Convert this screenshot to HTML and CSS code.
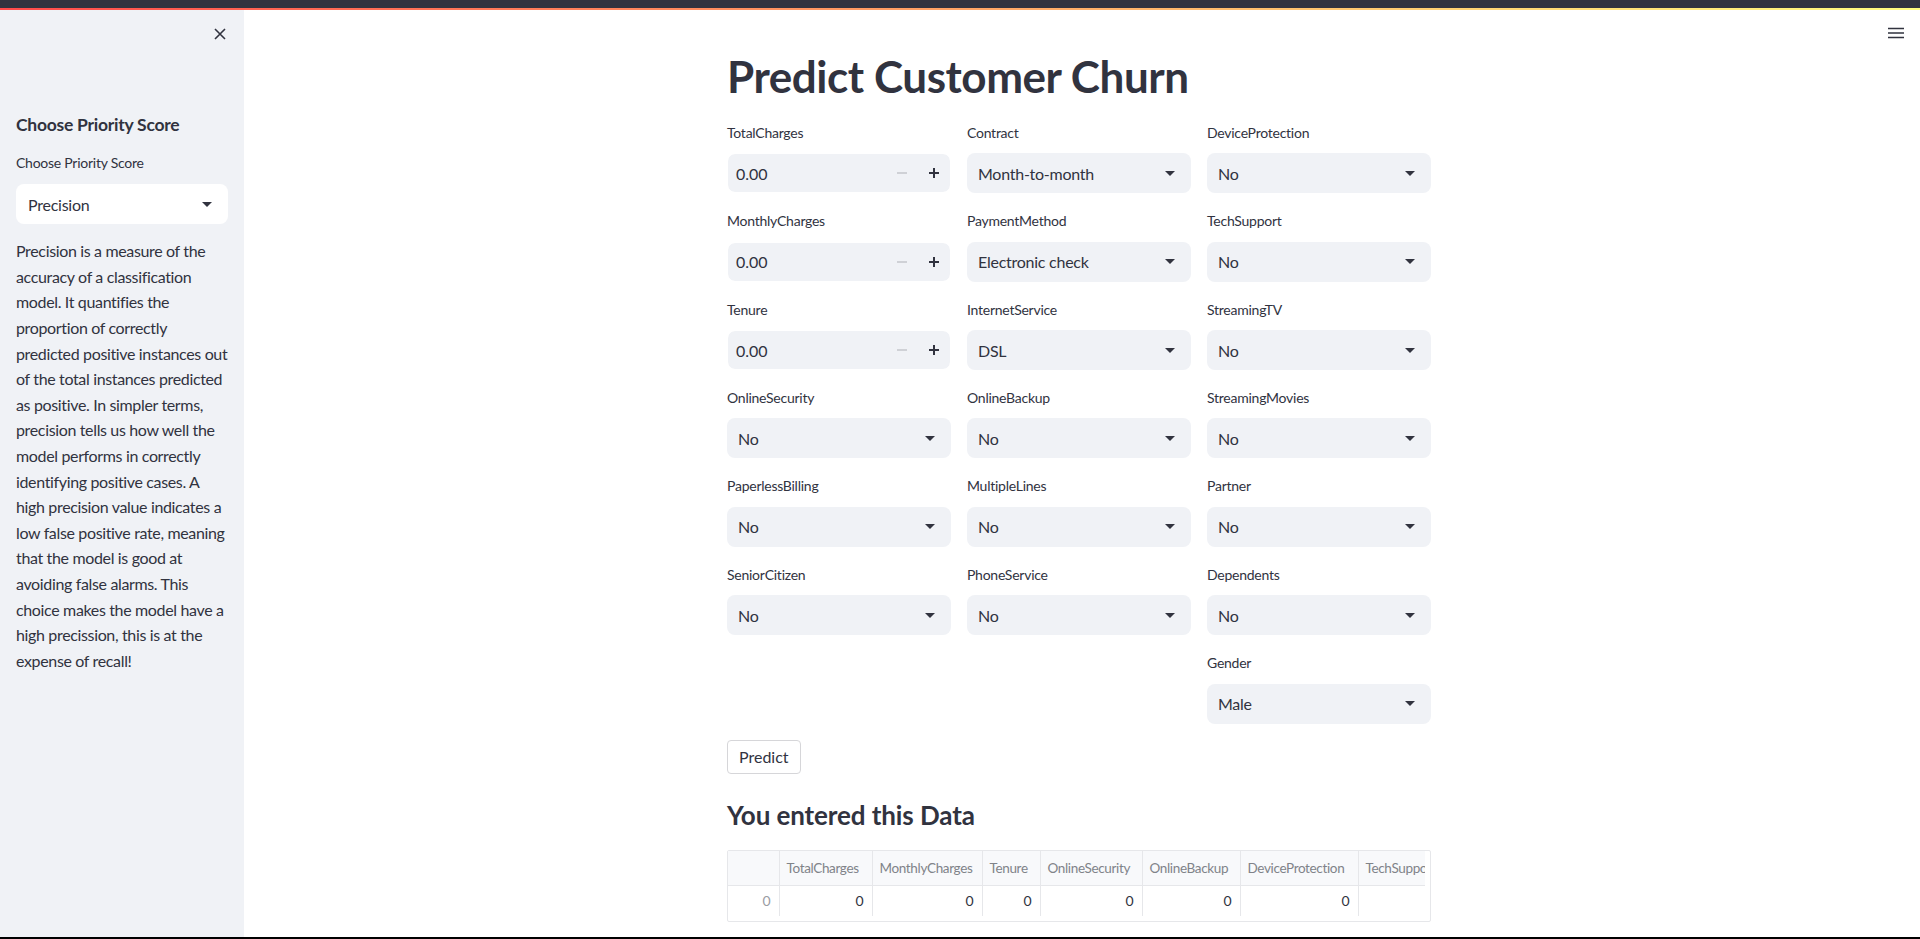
FILE: index.html
```html
<!DOCTYPE html>
<html lang="en">
<head>
<meta charset="utf-8">
<title>Predict Customer Churn</title>
<link rel="stylesheet" href="styles.css">
</head>
<body>
<div class="topbar"></div>
<div class="decoration"></div>
<div class="app">
  <aside class="sidebar">
    <div class="sidebar-head">
      <button class="close" aria-label="Close sidebar">
        <svg width="12" height="12" viewBox="0 0 12 12"><path d="M1 1L11 11M11 1L1 11" stroke="#31333f" stroke-width="1.6" fill="none"/></svg>
      </button>
    </div>
    <h2 class="sb-title">Choose Priority Score</h2>
    <div class="field">
      <div class="wlabel">Choose Priority Score</div>
      <div class="select select-white"><span>Precision</span><svg class="caret" width="10" height="5" viewBox="0 0 10 5"><path d="M0 0H10L5 5Z" fill="#31333f"/></svg></div>
    </div>
    <p class="desc">Precision is a measure of the<br>accuracy of a classification<br>model. It quantifies the<br>proportion of correctly<br>predicted positive instances out<br>of the total instances predicted<br>as positive. In simpler terms,<br>precision tells us how well the<br>model performs in correctly<br>identifying positive cases. A<br>high precision value indicates a<br>low false positive rate, meaning<br>that the model is good at<br>avoiding false alarms. This<br>choice makes the model have a<br>high precission, this is at the<br>expense of recall!</p>
  </aside>
  <main class="main">
    <button class="menu" aria-label="Menu">
      <svg width="16" height="12" viewBox="0 0 16 12"><path d="M0 1.5H16M0 6H16M0 10.5H16" stroke="#31333f" stroke-width="1.6"/></svg>
    </button>
    <div class="block">
      <h1 class="title">Predict Customer Churn</h1>
      <div class="cols">
        <div class="col">
          <div class="field"><div class="wlabel">TotalCharges</div>
            <div class="number"><span class="num-val">0.00</span><span class="step minus"></span><span class="step plus"></span></div></div>
          <div class="field"><div class="wlabel">MonthlyCharges</div>
            <div class="number"><span class="num-val">0.00</span><span class="step minus"></span><span class="step plus"></span></div></div>
          <div class="field"><div class="wlabel">Tenure</div>
            <div class="number"><span class="num-val">0.00</span><span class="step minus"></span><span class="step plus"></span></div></div>
          <div class="field"><div class="wlabel">OnlineSecurity</div>
            <div class="select"><span>No</span><svg class="caret" width="10" height="5" viewBox="0 0 10 5"><path d="M0 0H10L5 5Z" fill="#31333f"/></svg></div></div>
          <div class="field"><div class="wlabel">PaperlessBilling</div>
            <div class="select"><span>No</span><svg class="caret" width="10" height="5" viewBox="0 0 10 5"><path d="M0 0H10L5 5Z" fill="#31333f"/></svg></div></div>
          <div class="field"><div class="wlabel">SeniorCitizen</div>
            <div class="select"><span>No</span><svg class="caret" width="10" height="5" viewBox="0 0 10 5"><path d="M0 0H10L5 5Z" fill="#31333f"/></svg></div></div>
        </div>
        <div class="col">
          <div class="field"><div class="wlabel">Contract</div>
            <div class="select"><span>Month-to-month</span><svg class="caret" width="10" height="5" viewBox="0 0 10 5"><path d="M0 0H10L5 5Z" fill="#31333f"/></svg></div></div>
          <div class="field"><div class="wlabel">PaymentMethod</div>
            <div class="select"><span>Electronic check</span><svg class="caret" width="10" height="5" viewBox="0 0 10 5"><path d="M0 0H10L5 5Z" fill="#31333f"/></svg></div></div>
          <div class="field"><div class="wlabel">InternetService</div>
            <div class="select"><span>DSL</span><svg class="caret" width="10" height="5" viewBox="0 0 10 5"><path d="M0 0H10L5 5Z" fill="#31333f"/></svg></div></div>
          <div class="field"><div class="wlabel">OnlineBackup</div>
            <div class="select"><span>No</span><svg class="caret" width="10" height="5" viewBox="0 0 10 5"><path d="M0 0H10L5 5Z" fill="#31333f"/></svg></div></div>
          <div class="field"><div class="wlabel">MultipleLines</div>
            <div class="select"><span>No</span><svg class="caret" width="10" height="5" viewBox="0 0 10 5"><path d="M0 0H10L5 5Z" fill="#31333f"/></svg></div></div>
          <div class="field"><div class="wlabel">PhoneService</div>
            <div class="select"><span>No</span><svg class="caret" width="10" height="5" viewBox="0 0 10 5"><path d="M0 0H10L5 5Z" fill="#31333f"/></svg></div></div>
        </div>
        <div class="col">
          <div class="field"><div class="wlabel">DeviceProtection</div>
            <div class="select"><span>No</span><svg class="caret" width="10" height="5" viewBox="0 0 10 5"><path d="M0 0H10L5 5Z" fill="#31333f"/></svg></div></div>
          <div class="field"><div class="wlabel">TechSupport</div>
            <div class="select"><span>No</span><svg class="caret" width="10" height="5" viewBox="0 0 10 5"><path d="M0 0H10L5 5Z" fill="#31333f"/></svg></div></div>
          <div class="field"><div class="wlabel">StreamingTV</div>
            <div class="select"><span>No</span><svg class="caret" width="10" height="5" viewBox="0 0 10 5"><path d="M0 0H10L5 5Z" fill="#31333f"/></svg></div></div>
          <div class="field"><div class="wlabel">StreamingMovies</div>
            <div class="select"><span>No</span><svg class="caret" width="10" height="5" viewBox="0 0 10 5"><path d="M0 0H10L5 5Z" fill="#31333f"/></svg></div></div>
          <div class="field"><div class="wlabel">Partner</div>
            <div class="select"><span>No</span><svg class="caret" width="10" height="5" viewBox="0 0 10 5"><path d="M0 0H10L5 5Z" fill="#31333f"/></svg></div></div>
          <div class="field"><div class="wlabel">Dependents</div>
            <div class="select"><span>No</span><svg class="caret" width="10" height="5" viewBox="0 0 10 5"><path d="M0 0H10L5 5Z" fill="#31333f"/></svg></div></div>
          <div class="field"><div class="wlabel">Gender</div>
            <div class="select"><span>Male</span><svg class="caret" width="10" height="5" viewBox="0 0 10 5"><path d="M0 0H10L5 5Z" fill="#31333f"/></svg></div></div>
        </div>
      </div>
      <button class="btn">Predict</button>
      <h3 class="subtitle">You entered this Data</h3>
      <div class="frame">
        <div class="frame-inner">
          <table class="df">
            <colgroup>
              <col class="c-idx"><col class="c1"><col class="c2"><col class="c3"><col class="c4"><col class="c5"><col class="c6"><col class="c7">
            </colgroup>
            <thead>
              <tr><th class="idx"></th><th>TotalCharges</th><th>MonthlyCharges</th><th>Tenure</th><th>OnlineSecurity</th><th>OnlineBackup</th><th>DeviceProtection</th><th>TechSupport</th></tr>
            </thead>
            <tbody>
              <tr><td class="idx">0</td><td>0</td><td>0</td><td>0</td><td>0</td><td>0</td><td>0</td><td></td></tr>
            </tbody>
          </table>
        </div>
      </div>
    </div>
  </main>
</div>
<div class="bottombar"></div>
</body>
</html>
```
FILE: styles.css
```css
* { box-sizing: border-box; }
html, body { margin: 0; padding: 0; }
body {
  height: 939px;
  overflow: hidden;
  display: flex;
  flex-direction: column;
  font-family: Lato, "Noto Sans", sans-serif;
  color: #31333f;
  background: #fff;
}
.topbar { height: 8px; background: #31333f; flex: none; }
.decoration { height: 2px; flex: none; background: linear-gradient(90deg, #ff4b4b, #fffd80); }
.bottombar { height: 2px; flex: none; background: #000; }
.app { flex: 1; display: flex; min-height: 0; }

/* Sidebar */
.sidebar {
  width: 244px;
  flex: none;
  background: #f0f2f6;
  padding: 0 16px;
}
.sidebar-head { display: flex; justify-content: flex-end; margin-top: 12px; height: 24px; align-items: center; }
.close { width: 16px; height: 24px; border: 0; padding: 0; background: none; display: flex; align-items: center; justify-content: center; }
.sb-title { margin: 68px 0 0; font-size: 17.5px; line-height: 22.8px; font-weight: 700; letter-spacing: -0.25px; }
.sidebar .field { margin-top: 15px; }
.sidebar .wlabel { margin-bottom: 10px; }
.desc { margin: 14px 0 0; font-size: 16px; line-height: 25.6px; white-space: nowrap; letter-spacing: -0.35px; }

/* Main */
.main { flex: 1; position: relative; display: flex; justify-content: center; padding-right: 6px; }
.menu { position: absolute; top: 17px; right: 16px; border: 0; padding: 0; background: none; width: 16px; height: 12px; display: block; }
.menu svg { display: block; }
.block { width: 704px; padding-top: 40px; }
.title { margin: 0; font-size: 44px; line-height: 52.8px; font-weight: 700; letter-spacing: -0.45px; }

.cols { margin-top: 19px; display: grid; grid-template-columns: repeat(3, 1fr); column-gap: 16px; align-items: start; }
.col { display: flex; flex-direction: column; gap: 17px; }
.wlabel { font-size: 14px; line-height: 22.4px; margin-bottom: 9px; letter-spacing: -0.25px; }

.select, .number {
  height: 40px;
  border-radius: 8px;
  background: #f0f2f6;
  display: flex;
  align-items: center;
  font-size: 16px;
}
.select { padding: 0 16px 0 11px; justify-content: space-between; letter-spacing: -0.25px; }
.select-white { background: #fff; padding-left: 12px; }
.caret { display: block; flex: none; }
.number { border: 1px solid #fff; background-clip: padding-box; padding-left: 8px; }
.num-val { flex: 1; }
.step { width: 32px; height: 100%; position: relative; flex: none; }
.step::before, .plus::after { content: ""; position: absolute; left: 11px; top: 18px; width: 10px; height: 2px; background: #31333f; }
.minus::before { background: #cfd1d6; }
.plus::after { left: 15px; top: 14px; width: 2px; height: 10px; }

.btn {
  margin-top: 16px;
  display: block;
  height: 34px;
  padding: 0 11px;
  font-family: inherit;
  font-size: 16px;
  color: #31333f;
  background: #fff;
  border: 1px solid #d6d6d9;
  border-radius: 4px;
}
.subtitle { margin: 24px 0 0; font-size: 26px; line-height: 34px; font-weight: 700; letter-spacing: -0.1px; }

.frame { margin-top: 18px; border: 1px solid #e6e7ea; border-radius: 2px; padding: 0 5px 5px 0; }
.frame-inner { overflow: hidden; }
.df { border-collapse: collapse; table-layout: fixed; width: 760px; font-size: 14px; }
.c-idx { width: 51px; } .c1 { width: 93px; } .c2 { width: 110px; } .c3 { width: 58px; }
.c4 { width: 102px; } .c5 { width: 98px; } .c6 { width: 118px; } .c7 { width: 130px; }
.df th {
  height: 35px;
  background: #f8f9fb;
  color: #808389;
  font-weight: 400;
  font-size: 13.5px;
  letter-spacing: -0.35px;
  text-align: left;
  padding: 0 6px 0 7px;
  white-space: nowrap;
  overflow: hidden;
  border-right: 1px solid #e6e7ea;
  border-bottom: 1px solid #e6e7ea;
}
.df td {
  height: 30px;
  text-align: right;
  padding: 0 8px;
  border-right: 1px solid #e6e7ea;
}
.df td.idx { color: #9a9ca3; }
```
